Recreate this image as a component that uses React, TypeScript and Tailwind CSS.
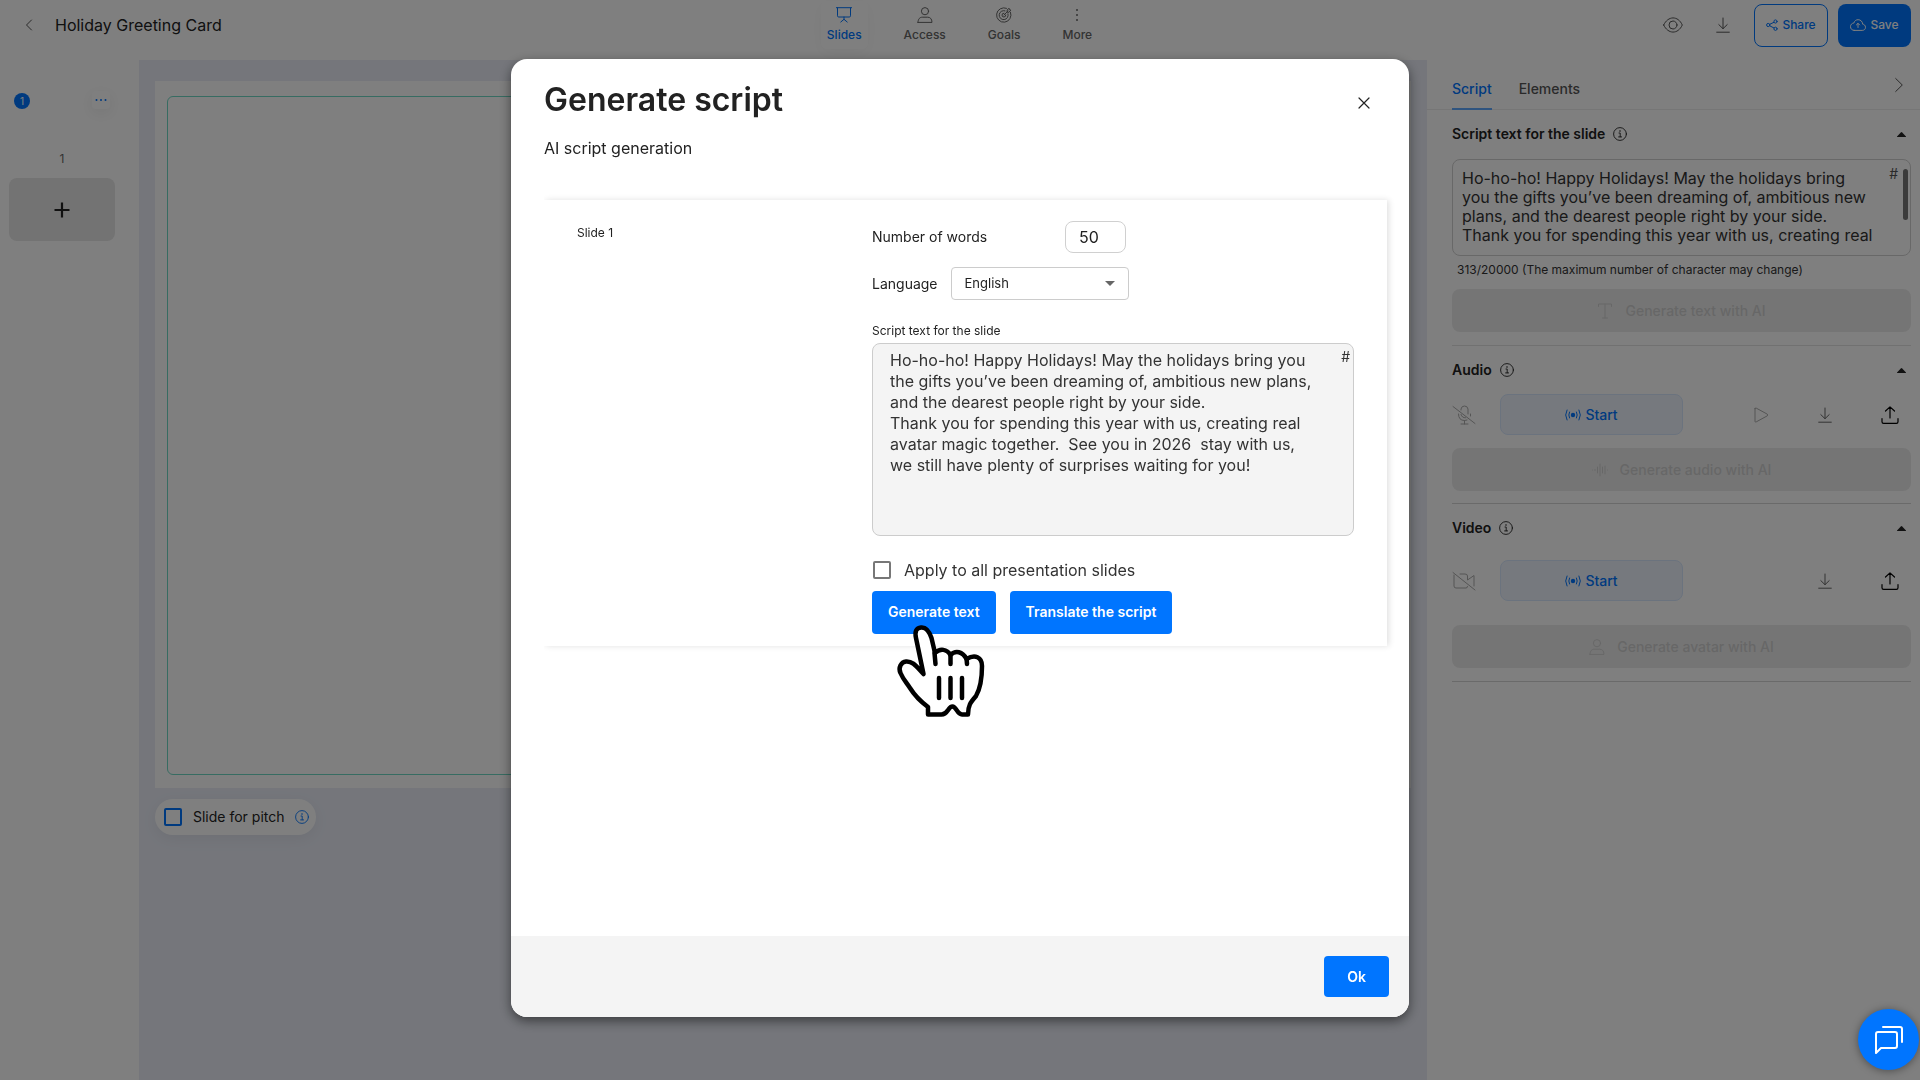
import React, { useState } from 'react';

const SCRIPT =
  'Ho-ho-ho! Happy Holidays! May the holidays bring you the gifts you’ve been dreaming of, ambitious new plans, and the dearest people right by your side.\nThank you for spending this year with us, creating real avatar magic together.  See you in 2026  stay with us, we still have plenty of surprises waiting for you!';

interface IconProps {
  className?: string;
  children: React.ReactNode;
  viewBox?: string;
}

function Icon({ className = 'size-4', children, viewBox = '0 0 16 16' }: IconProps) {
  return (
    <svg
      className={className}
      viewBox={viewBox}
      fill="none"
      stroke="currentColor"
      strokeLinecap="round"
      strokeLinejoin="round"
      aria-hidden="true"
    >
      {children}
    </svg>
  );
}

const InfoIcon = ({ className = 'size-3.5' }) => (
  <Icon className={className} viewBox="0 0 14 14">
    <circle cx="7" cy="7" r="6.4" strokeWidth=".9" />
    <path strokeWidth=".9" d="M6 6h1.200v3.800M5.600 9.900h3" />
    <circle cx="7" cy="4" r=".8" fill="currentColor" stroke="none" />
  </Icon>
);

const DownloadIcon = () => (
  <Icon>
    <path d="M8 1v10.500M3.800 7.600 8 11.700l4.200-4.100M1.700 15.200h12.600" />
  </Icon>
);

const UploadIcon = () => (
  <Icon className="size-[18px]" viewBox="0 0 18 18">
    <path
      strokeWidth="1.2"
      d="M9 12V1.200M4.500 5 9 .900 13.500 5M1 12.500v3.200q0 1.600 1.600 1.600h12.800q1.600 0 1.600-1.600v-3.200"
    />
  </Icon>
);

const PersonIcon = () => (
  <Icon>
    <circle cx="8" cy="4.200" r="3.600" />
    <path d="M1 15.400h14c0-3.600-2-5.200-4.200-5.200H5.200C3 10.200 1 11.800 1 15.400z" />
  </Icon>
);

const LiveIcon = () => (
  <Icon className="h-3 w-4" viewBox="0 0 16 12">
    <circle cx="8" cy="6" r="2.200" fill="currentColor" stroke="none" />
    <path d="M4.500 3q-1.500 3 0 6M11.500 3q1.500 3 0 6M2 1q-2.800 5 0 10M14 1q2.800 5 0 10" />
  </Icon>
);

function NavItem({ label, active, children }: { label: string; active?: boolean; children: React.ReactNode }) {
  return (
    <button
      type="button"
      className={
        active
          ? 'flex h-12 flex-col items-center gap-1 rounded-md bg-white px-1.5 pt-1.5 text-[#0075ff] shadow-[0_4px_16px_rgba(0,0,0,0.04)]'
          : 'flex h-12 flex-col items-center gap-1 px-1.5 pt-1.5 text-[#666]'
      }
    >
      {children}
      <span className="text-xs font-medium leading-4">{label}</span>
    </button>
  );
}

function Header() {
  return (
    <header className="flex h-[60px] justify-between bg-white">
      <div className="flex h-[50px] flex-1 items-center gap-[19px] pl-[22px]">
        <button type="button" aria-label="Back" className="text-[#555]">
          <Icon className="size-3.5" viewBox="0 0 14 14">
            <path d="M9.500 2 4.500 7l5 5" />
          </Icon>
        </button>
        <h1 className="text-base">Holiday Greeting Card</h1>
      </div>
      <nav className="mr-3.5 flex gap-[30px] pt-px">
        <NavItem label="Slides" active>
          <Icon>
            <path d="M0 .700h16M1.500 1v7.800q0 1.200 1.200 1.200h10.600q1.200 0 1.200-1.200V1M8 10v2.500M4.800 15 8 12.300l3.200 2.700" />
          </Icon>
        </NavItem>
        <NavItem label="Access">
          <PersonIcon />
        </NavItem>
        <NavItem label="Goals">
          <Icon>
            <path d="M14.500 5.300A7.200 7.200 0 1 1 10.500 1.300M12 6.800A4.500 4.500 0 1 1 9 3.800M8 8l4-4M8 6.200A1.900 1.900 0 1 0 9.800 8M11.200 4.800V3L13 1.200l.4 1.500 1.500.4L13.200 5z" />
          </Icon>
        </NavItem>
        <NavItem label="More">
          <Icon>
            <g fill="currentColor" stroke="none">
              <circle cx="8" cy="3" r="1" />
              <circle cx="8" cy="8" r="1" />
              <circle cx="8" cy="13" r="1" />
            </g>
          </Icon>
        </NavItem>
      </nav>
      <div className="flex h-[50px] flex-1 items-center justify-end pr-[9px] text-[#555]">
        <button type="button" aria-label="Preview" className="mr-8">
          <Icon className="h-4 w-5" viewBox="0 0 20 16">
            <path d="M.700 8C5-1.500 15-1.500 19.300 8 15 17.500 5 17.500.700 8z" />
            <circle cx="10" cy="8" r="4" />
          </Icon>
        </button>
        <button type="button" aria-label="Download" className="mr-[23px]">
          <DownloadIcon />
        </button>
        <button
          type="button"
          className="mr-2.5 flex h-[43px] w-[74px] items-center justify-center gap-1 rounded-lg border border-[#0075ff] text-xs font-medium text-[#0075ff]"
        >
          <Icon className="size-3" viewBox="0 0 12 12">
            <circle cx="2.200" cy="6" r="1.600" />
            <circle cx="9.500" cy="2.500" r="1.600" />
            <circle cx="9.500" cy="9.800" r="1.600" />
            <path d="m3.700 5.300 4.300-2M3.700 6.800l4.300 2.200" />
          </Icon>
          Share
        </button>
        <button
          type="button"
          className="flex h-[43px] w-[73px] items-center justify-center gap-1 rounded-lg bg-[#0075ff] text-xs font-medium text-white"
        >
          <Icon className="h-3 w-4" viewBox="0 0 16 12">
            <path d="M4.200 11.400h8c2 0 3.300-1.300 3.300-3.100S14 5.200 12.700 5.200C12.500 2.500 10.600.700 8.100.700 6 .700 4.400 2 3.900 4 1.800 4.200.500 5.700.500 7.600c0 2.200 1.500 3.800 3.700 3.800zM8 8.500v-4M6.400 5.900 8 4.300l1.600 1.600" />
          </Icon>
          Save
        </button>
      </div>
    </header>
  );
}

function SlideList() {
  return (
    <aside className="w-[139px] shrink-0 bg-white pl-[9px] pt-[27px]">
      <div className="relative flex h-[79px] w-[106px] items-end justify-center text-xs leading-[14px] text-[#666]">
        <span className="absolute left-[5px] top-1.5 flex size-4 items-center justify-center rounded-full bg-[#0075ff] text-[10px] leading-none text-white">
          1
        </span>
        <button
          type="button"
          aria-label="Slide menu"
          className="absolute right-[5px] top-1 flex size-[18px] items-center justify-center rounded bg-white text-[#0075ff] shadow-[0_4px_16px_rgba(0,0,0,0.08)]"
        >
          <Icon className="h-1 w-3" viewBox="0 0 12 4">
            <g fill="currentColor" stroke="none">
              <circle cx="1.500" cy="2" r="1" />
              <circle cx="6" cy="2" r="1" />
              <circle cx="10.500" cy="2" r="1" />
            </g>
          </Icon>
        </button>
        1
      </div>
      <button
        type="button"
        aria-label="Add slide"
        className="mt-3 flex h-[63px] w-[106px] items-center justify-center rounded-lg bg-[#e6e6e6]"
      >
        <Icon>
          <path strokeWidth="2.2" strokeLinecap="butt" d="M8 .500v15M.500 8h15" />
        </Icon>
      </button>
    </aside>
  );
}

function Canvas() {
  return (
    <section className="min-w-0 flex-1 bg-[#eaedf7] px-4 pt-[21px]">
      <div className="h-[707px] bg-white p-3 pt-[15px]">
        <div className="h-[679px] rounded-md border border-[#6fd9c4]" />
      </div>
      <label className="mt-[11px] inline-flex h-9 items-center rounded-full bg-white pl-[9px] pr-[7px] text-sm text-[#222] shadow-[0_4px_16px_rgba(0,0,0,0.06)]">
        <input type="checkbox" className="mr-[11px] size-[18px] appearance-none rounded-xs border-2 border-[#0075ff]" />
        Slide for pitch
        <InfoIcon className="ml-2.5 size-3.5 text-[#0075ff]" />
      </label>
    </section>
  );
}

function SectionTitle({ children }: { children: React.ReactNode }) {
  return (
    <div className="flex h-12 items-center gap-2 pr-[5px]">
      <h2 className="text-sm font-semibold">{children}</h2>
      <InfoIcon />
      <button type="button" aria-label="Collapse" className="ml-auto">
        <svg className="h-[5px] w-[9px]" viewBox="0 0 9 5" fill="currentColor" aria-hidden="true">
          <path d="M0 4.500 3.800.400q.7-.600 1.400 0L9 4.500V5H0z" />
        </svg>
      </button>
    </div>
  );
}

function AiButton({ icon, children }: { icon: React.ReactNode; children: React.ReactNode }) {
  return (
    <button
      type="button"
      disabled
      className="flex h-[43px] w-full items-center justify-center gap-3 rounded-lg bg-[#ebebeb] text-sm font-medium text-[#cfcfcf]"
    >
      {icon}
      {children}
    </button>
  );
}

function MediaRow({ icon, play }: { icon: React.ReactNode; play?: boolean }) {
  return (
    <div className="flex h-[41px] items-center pr-3 text-[#aaa]">
      <span className="w-12 shrink-0">{icon}</span>
      <button
        type="button"
        className="flex h-[41px] w-[183px] items-center justify-center gap-1 rounded-lg border border-[#d6e6fc] bg-[#edf3fd] text-sm font-medium text-[#0075ff]"
      >
        <LiveIcon />
        Start
      </button>
      <div className="ml-auto flex items-center gap-12">
        {play && (
          <button type="button" aria-label="Play">
            <Icon>
              <path d="M2 1.700v12.600q0 1.200 1.200.600l11-6q1.200-.900 0-1.800l-11-6Q2 .500 2 1.700z" />
            </Icon>
          </button>
        )}
        <button type="button" aria-label="Download" className="text-[#666]">
          <DownloadIcon />
        </button>
        <button type="button" aria-label="Upload" className="text-black">
          <UploadIcon />
        </button>
      </div>
    </div>
  );
}

function SidePanel() {
  return (
    <aside className="w-[493px] shrink-0 bg-white">
      <div className="flex h-[50px] items-end gap-[27px] border-b border-[#ececec] pl-[25px] pr-[17px] text-sm font-medium">
        <button type="button" className="-mb-px h-10 border-b-2 border-[#5fa8ff] text-[#0075ff]">
          Script
        </button>
        <button type="button" className="-mb-px h-10 border-b-2 border-transparent text-[#555]">
          Elements
        </button>
        <button type="button" aria-label="Hide panel" className="mb-4 ml-auto text-[#555]">
          <Icon className="h-4 w-2" viewBox="0 0 8 16">
            <path d="m.700 1.500 6.600 6.500-6.600 6.500" />
          </Icon>
        </button>
      </div>
      <div className="pl-[25px] pr-[9px]">
        <section className="border-b border-[#e2e2e2] pb-[13px]">
          <SectionTitle>Script text for the slide</SectionTitle>
          <div className="relative mt-px h-[97px] rounded-lg border border-[#d0d0d0] pl-[9px] pr-9 pt-[9px]">
            <textarea
              readOnly
              aria-label="Slide script"
              value={SCRIPT}
              className="block h-[76px] w-full resize-none overflow-hidden text-base leading-[19px] text-[#333]"
            />
            <button type="button" className="absolute right-3 top-1 text-sm text-[#555]">
              #
            </button>
            <div className="absolute right-0.5 top-[9px] h-[51px] w-[5px] rounded-full bg-[#777]" />
          </div>
          <p className="pb-[7px] pl-[5px] pt-0.5 text-xs leading-6 text-[#333]">
            313/20000 (The maximum number of character may change)
          </p>
          <AiButton
            icon={
              <Icon>
                <path d="M1.500 3.500V1h13v2.500M8 1v14M5.500 15h5" />
              </Icon>
            }
          >
            Generate text with AI
          </AiButton>
        </section>
        <section className="border-b border-[#d4d4d4] pb-3">
          <SectionTitle>Audio</SectionTitle>
          <div className="mb-[13px]">
            <MediaRow
              play
              icon={
                <Icon className="h-5 w-6" viewBox="0 0 24 20">
                  <path d="M1 1.500 23 18.500M9 5V4q.5-3 3.500-3T16 4v5M9 9.500q1 3.500 4.500 3.300M6.500 9q0 6.500 6 6.500l2.500-.500M18.500 9v2M12.500 15.500V19M9 19h7" />
                </Icon>
              }
            />
          </div>
          <AiButton
            icon={
              <Icon>
                <path d="M.500 8v.100M3 7.500v1M5.500 5v6M8 2v12M10.500 5v6M13 4v8M15.500 8v.100" />
              </Icon>
            }
          >
            Generate audio with AI
          </AiButton>
        </section>
        <section className="border-b border-[#d4d4d4] pb-[13px]">
          <SectionTitle>Video</SectionTitle>
          <div className="mb-6 mt-2">
            <MediaRow
              icon={
                <Icon className="h-5 w-6" viewBox="0 0 24 20">
                  <path d="M1 1.500 23 19M2 4v11q0 2 2 2h10q1.500 0 1.500-1.500M8 3h5q2.500 0 2.500 2v4l6.500-4.500V15" />
                </Icon>
              }
            />
          </div>
          <AiButton icon={<PersonIcon />}>Generate avatar with AI</AiButton>
        </section>
      </div>
    </aside>
  );
}

function HandCursor() {
  return (
    <svg
      className="pointer-events-none absolute left-6 top-[33px] h-[94px] w-[90px]"
      viewBox="0 0 90 94"
      fill="#fff"
      stroke="#000"
      strokeWidth="4.5"
      strokeLinecap="round"
      strokeLinejoin="round"
      aria-hidden="true"
    >
      <path d="M27.500 50 20 14C18.500 7 20.500 4 25 3.500S33 6.500 35.500 14L39 29c5-5 12-4 15.500 2 5-5 12-3.500 16 4 8.500-5 15.500-2 15.500 7 0 13-2 23-6 30-5 6-8 9-8 18.500h-6c-5 0-5.500-8-9.500-8-4.500 0-4.500 8-11 8H32V83C24 77 19 72 14 64 10 58 7 55 4.500 49 2 44 5 38 10 37.500 17 37 20 42 27.500 50z" />
      <path fill="none" d="M38.500 29l1 11M54.500 31v9M70.500 34l.500 6M43 54v20M54.500 54v20M66 54v20" />
    </svg>
  );
}

function GenerateDialog() {
  const [words, setWords] = useState('50');
  const [text, setText] = useState(SCRIPT);

  return (
    <div className="fixed inset-0 flex justify-center bg-black/50 pb-[63px] pt-[59px]">
      <div
        role="dialog"
        aria-modal="true"
        aria-labelledby="dialog-title"
        className="flex w-full max-w-[898px] flex-col overflow-hidden rounded-2xl bg-white text-[#222] shadow-[0_4px_12px_rgba(0,0,0,0.5)]"
      >
        <div className="flex-1 pl-[33px] pr-[22px] pt-[21px]">
          <div className="flex justify-between pr-3">
            <h2 id="dialog-title" className="text-[32px] font-semibold leading-10">
              Generate script
            </h2>
            <button type="button" aria-label="Close" className="mr-px pt-1.5">
              <Icon className="size-5" viewBox="0 0 20 20">
                <path strokeWidth="1.2" d="m5 5 10 10M15 5 5 15" />
              </Icon>
            </button>
          </div>
          <p className="mt-4 text-base leading-6">AI script generation</p>
          <div className="mt-10 flex pb-3 pl-[33px] pr-[33px] pt-[21px] shadow-[2px_0_6px_rgba(0,0,0,0.12)] [clip-path:inset(-10px_-10px_-100px_0)]">
            <p className="flex-1 text-xs leading-6">Slide 1</p>
            <div className="w-[482px] text-sm">
              <div className="flex items-center">
                <label htmlFor="words" className="w-[193px]">
                  Number of words
                </label>
                <input
                  id="words"
                  value={words}
                  onChange={(e) => setWords(e.target.value)}
                  className="h-8 w-[61px] rounded-lg border border-[#d0d0d0] px-[13px] text-base"
                />
              </div>
              <div className="mt-3.5 flex items-center gap-[13px]">
                <label htmlFor="language">Language</label>
                <div className="relative">
                  <select
                    id="language"
                    className="h-[33px] w-[178px] appearance-none rounded border border-[#ccc] bg-white px-[13px] text-[13px]"
                  >
                    <option>English</option>
                  </select>
                  <svg
                    className="pointer-events-none absolute right-3.5 top-3.5 h-[5px] w-2.5 text-[#666]"
                    viewBox="0 0 10 5"
                    fill="currentColor"
                    aria-hidden="true"
                  >
                    <path d="M0 0h10L5 5z" />
                  </svg>
                </div>
              </div>
              <label htmlFor="script" className="mt-[23px] block text-xs leading-4">
                Script text for the slide
              </label>
              <div className="relative mt-1">
                <textarea
                  id="script"
                  value={text}
                  onChange={(e) => setText(e.target.value)}
                  className="block h-[193px] w-full resize-none overflow-hidden rounded-lg border border-[#ccc] bg-[#f4f4f4] py-1.5 pl-[17px] pr-[38px] text-base leading-[21px] text-[#333]"
                />
                <button type="button" className="absolute right-1 top-1 text-sm text-[#333]">
                  #
                </button>
              </div>
              <label className="mt-[22px] flex items-center gap-[13px] text-base leading-6 text-[#333]">
                <input type="checkbox" className="ml-px size-[18px] appearance-none rounded-xs border-2 border-[#777]" />
                Apply to all presentation slides
              </label>
              <div className="relative mt-[9px] flex gap-3.5 font-semibold text-white">
                <button type="button" className="h-[43px] rounded bg-[#0075ff] px-4 pb-0.5">
                  Generate text
                </button>
                <button type="button" className="h-[43px] rounded bg-[#0075ff] px-4 pb-0.5">
                  Translate the script
                </button>
                <HandCursor />
              </div>
            </div>
          </div>
        </div>
        <footer className="flex h-[81px] items-center justify-end bg-[#f4f4f4] pr-5">
          <button type="button" className="h-[41px] w-[65px] rounded bg-[#0075ff] text-sm font-semibold text-white">
            Ok
          </button>
        </footer>
      </div>
    </div>
  );
}

export default function App() {
  return (
    <div className="flex min-h-screen flex-col overflow-hidden bg-white font-['Inter',sans-serif] text-[#222]">
      <Header />
      <main className="flex flex-1">
        <SlideList />
        <Canvas />
        <SidePanel />
      </main>
      <GenerateDialog />
      <button
        type="button"
        aria-label="Chat"
        className="fixed bottom-2.5 right-px flex size-[61px] items-center justify-center rounded-full bg-[#0075ff] text-white shadow-[0_1px_8px_rgba(0,0,0,0.4)]"
      >
        <Icon className="size-7" viewBox="0 0 28 28">
          <path strokeWidth="2" d="M1 27V8q0-2 2-2h17q2 0 2 2v12q0 2-2 2H6zM8 1h17q2 0 2 2v13" />
        </Icon>
      </button>
    </div>
  );
}
